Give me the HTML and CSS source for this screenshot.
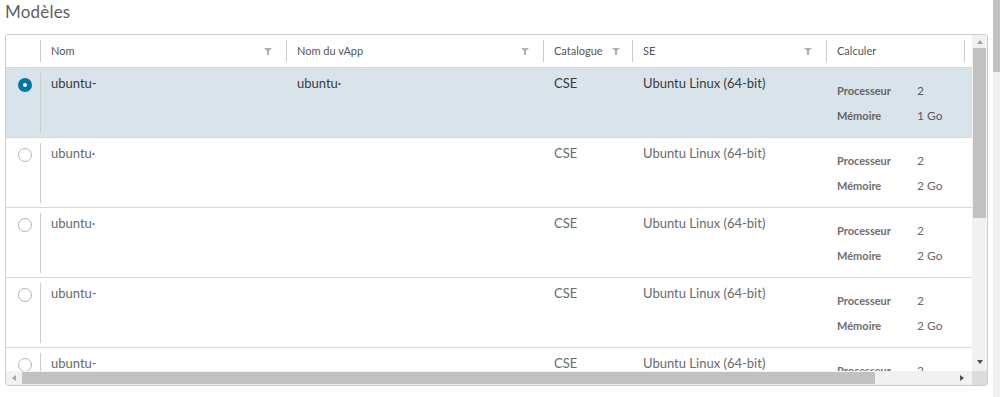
FILE: index.html
```html
<!DOCTYPE html>
<html lang="fr">
<head>
<meta charset="utf-8">
<title>Modèles</title>
<link rel="stylesheet" href="styles.css">
</head>
<body>
<div class="page">
  <main class="content">
    <h1 class="title">Modèles</h1>
    <div class="grid">
      <div class="grid-main">
        <div class="viewport">
          <div class="row head">
            <div class="cell sel"></div>
            <div class="cell c-nom"><span>Nom</span><svg class="filter" width="8" height="7" viewBox="0 0 8 7"><polygon points="0,0 8,0 5,3 5,7 3,7 3,3"/></svg></div>
            <div class="cell c-vapp"><span>Nom du vApp</span><svg class="filter" width="8" height="7" viewBox="0 0 8 7"><polygon points="0,0 8,0 5,3 5,7 3,7 3,3"/></svg></div>
            <div class="cell c-cat"><span>Catalogue</span><svg class="filter" width="8" height="7" viewBox="0 0 8 7"><polygon points="0,0 8,0 5,3 5,7 3,7 3,3"/></svg></div>
            <div class="cell c-se"><span>SE</span><svg class="filter" width="8" height="7" viewBox="0 0 8 7"><polygon points="0,0 8,0 5,3 5,7 3,7 3,3"/></svg></div>
            <div class="cell c-calc"><span>Calculer</span></div>
            <div class="cell c-rest"></div>
          </div>

          <div class="row selected">
            <div class="cell sel"><span class="radio checked"></span></div>
            <div class="cell c-nom">ubuntu-</div>
            <div class="cell c-vapp">ubuntu·</div>
            <div class="cell c-cat">CSE</div>
            <div class="cell c-se">Ubuntu Linux (64-bit)</div>
            <div class="cell c-calc"><dl class="spec"><dt>Processeur</dt><dd>2</dd><dt>Mémoire</dt><dd>1 Go</dd></dl></div>
            <div class="cell c-rest"></div>
          </div>

          <div class="row">
            <div class="cell sel"><span class="radio"></span></div>
            <div class="cell c-nom">ubuntu·</div>
            <div class="cell c-vapp"></div>
            <div class="cell c-cat">CSE</div>
            <div class="cell c-se">Ubuntu Linux (64-bit)</div>
            <div class="cell c-calc"><dl class="spec"><dt>Processeur</dt><dd>2</dd><dt>Mémoire</dt><dd>2 Go</dd></dl></div>
            <div class="cell c-rest"></div>
          </div>

          <div class="row">
            <div class="cell sel"><span class="radio"></span></div>
            <div class="cell c-nom">ubuntu·</div>
            <div class="cell c-vapp"></div>
            <div class="cell c-cat">CSE</div>
            <div class="cell c-se">Ubuntu Linux (64-bit)</div>
            <div class="cell c-calc"><dl class="spec"><dt>Processeur</dt><dd>2</dd><dt>Mémoire</dt><dd>2 Go</dd></dl></div>
            <div class="cell c-rest"></div>
          </div>

          <div class="row">
            <div class="cell sel"><span class="radio"></span></div>
            <div class="cell c-nom">ubuntu-</div>
            <div class="cell c-vapp"></div>
            <div class="cell c-cat">CSE</div>
            <div class="cell c-se">Ubuntu Linux (64-bit)</div>
            <div class="cell c-calc"><dl class="spec"><dt>Processeur</dt><dd>2</dd><dt>Mémoire</dt><dd>2 Go</dd></dl></div>
            <div class="cell c-rest"></div>
          </div>

          <div class="row">
            <div class="cell sel"><span class="radio"></span></div>
            <div class="cell c-nom">ubuntu-</div>
            <div class="cell c-vapp"></div>
            <div class="cell c-cat">CSE</div>
            <div class="cell c-se">Ubuntu Linux (64-bit)</div>
            <div class="cell c-calc"><dl class="spec"><dt>Processeur</dt><dd>2</dd><dt>Mémoire</dt><dd>2 Go</dd></dl></div>
            <div class="cell c-rest"></div>
          </div>
        </div>
        <div class="vscroll">
          <span class="arrow up"></span>
          <div class="vtrack"><div class="vthumb"></div></div>
          <span class="arrow down"></span>
        </div>
      </div>
      <div class="hbar">
        <div class="hscroll">
          <span class="arrow left"></span>
          <div class="htrack"><div class="hthumb"></div></div>
          <span class="arrow right"></span>
        </div>
        <div class="corner"></div>
      </div>
    </div>
  </main>
  <div class="page-scroll"><div class="page-thumb"></div></div>
</div>
</body>
</html>
```

FILE: styles.css
```css
* { box-sizing: border-box; }
html, body { margin: 0; padding: 0; background: #fff; }
body {
  font-family: Lato, "Open Sans", "Liberation Sans", sans-serif;
  color: #565656;
  overflow: hidden;
}
.page {
  display: flex;
  width: 1000px;
  height: 397px;
}
.content {
  flex: 1;
  padding: 0 5px 0 5px;
  min-width: 0;
}
.title {
  margin: 0;
  height: 34px;
  padding-top: 2px;
  font-size: 17px;
  line-height: 20px;
  font-weight: 400;
  color: #606060;
  letter-spacing: 0.2px;
}
.grid {
  border: 1px solid #cccccc;
  border-radius: 3px;
  height: 352px;
  display: flex;
  flex-direction: column;
  overflow: hidden;
}
.grid-main {
  display: flex;
  height: 336px;
}
.viewport {
  flex: 1;
  overflow: hidden;
  min-width: 0;
}
.row {
  display: flex;
  height: 70px;
  border-bottom: 1px solid #d7d7d7;
  font-size: 13px;
  line-height: 16px;
  color: #6a6a6a;
}
.row.head {
  height: 33px;
  border-bottom: 1px solid #d7d7d7;
  font-size: 11px;
  font-weight: 400;
  color: #555555;
  background: #ffffff;
}
.row.selected {
  background: #d9e4ea;
  color: #3a3a3a;
}
.cell {
  position: relative;
  flex: none;
  padding: 7px 8px 0 11px;
}
.head .cell {
  display: flex;
  align-items: center;
  justify-content: space-between;
  padding: 0 14px 0 11px;
}
.sel { width: 34px; padding: 0; display: flex; justify-content: center; padding-left: 3px; }
.c-nom { width: 246px; }
.c-vapp { width: 257px; }
.c-cat { width: 89px; }
.head .c-cat { padding-right: 12px; }
.c-se { width: 194px; }
.c-calc { width: 138px; }
.c-rest { flex: 1; }

.head .cell:not(.sel)::before,
.row .c-nom::before {
  content: "";
  position: absolute;
  left: 0;
  top: 5px;
  bottom: 4px;
  width: 1px;
  background: #cccccc;
}
.head .cell:not(.sel)::before { top: 5px; bottom: 5px; }

.filter { fill: #b0b0b0; flex: none; }

.radio {
  margin-top: 10px;
  width: 14px;
  height: 14px;
  border-radius: 50%;
  border: 1px solid #b3b3b3;
  background: #fff;
}
.radio.checked {
  border: 5px solid #0075a8;
  background: #ffffff;
}

.spec {
  margin: 8px 0 0;
  display: grid;
  grid-template-columns: 80px auto;
  row-gap: 9px;
  font-size: 11px;
  line-height: 16px;
}
.spec dt { font-weight: 700; color: #707070; }
.spec dd { margin: 0; font-size: 12px; color: #6a6a6a; }
.selected .spec dt { color: #666666; }
.selected .spec dd { color: #5a5a5a; }

.vscroll {
  width: 15px;
  background: #f1f1f1;
  display: flex;
  flex-direction: column;
  align-items: center;
}
.vtrack { flex: 1; width: 100%; padding: 0 1px; }
.vthumb { height: 170px; background: #c1c1c1; }
.hbar { display: flex; height: 14px; }
.hscroll {
  flex: 1;
  background: #f1f1f1;
  display: flex;
  align-items: center;
}
.htrack { flex: 1; height: 100%; padding: 1px 0; }
.hthumb { width: 853px; height: 100%; margin-left: 2px; background: #c1c1c1; }
.corner { width: 15px; background: #dcdcdc; }

.arrow { flex: none; width: 0; height: 0; border: 0 solid transparent; }
.arrow.up { margin: 5px 0 4px; border-width: 0 3.5px 4px; border-bottom-color: #a3a3a3; }
.arrow.down { margin: 4px 0 7px; border-width: 4px 3.5px 0; border-top-color: #505050; }
.arrow.left { margin: 0 4px 0 6px; border-width: 3.5px 4px 3.5px 0; border-right-color: #a3a3a3; }
.arrow.right { margin: 0 8px 0 6px; border-width: 3.5px 0 3.5px 4px; border-left-color: #505050; }

.page-scroll {
  width: 7px;
  background: #f1f1f1;
}
.page-thumb { height: 72px; background: #c1c1c1; }
```
